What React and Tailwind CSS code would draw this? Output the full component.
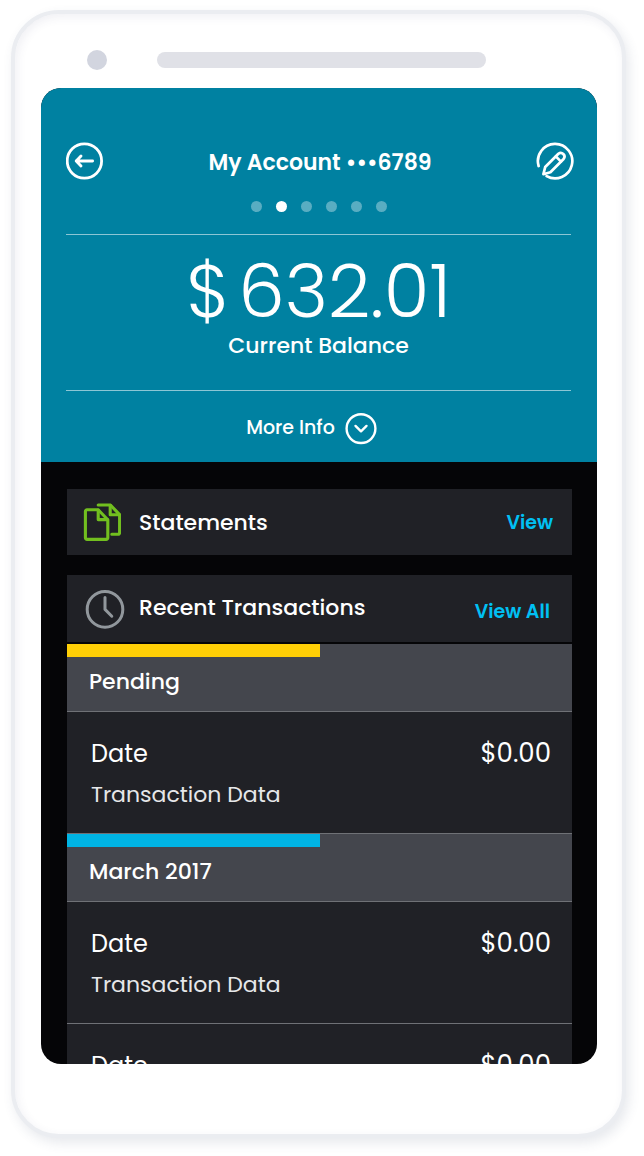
const transactionGroups = [
  { title: "Pending", bar: "bg-[#ffcf06]", rows: 1 },
  { title: "March 2017", bar: "bg-[#00b4e4]", rows: 2 },
];

function BackIcon() {
  return (
    <svg viewBox="0 0 38 38" className="size-[38px]" fill="none" stroke="currentColor" strokeLinecap="round" strokeLinejoin="round" aria-hidden="true">
      <circle cx="18.4" cy="19" r="17.2" strokeWidth="2.8" />
      <path d="M26.6 19H10.2M15 14L10.2 19l4.8 5" strokeWidth="2.9" />
    </svg>
  );
}

function EditIcon() {
  return (
    <svg viewBox="0 0 38 38" className="size-[38px]" fill="none" stroke="currentColor" strokeLinecap="round" strokeLinejoin="round" strokeWidth="2.7" aria-hidden="true">
      <path d="M2.6 24A17.2 17.2 0 1 1 10.6 34.1" />
      <path d="M7.4 32.2l1.8-7.2L22.4 11.8a3.7 3.7 0 0 1 5.2 5.2L14.4 30.2z" />
      <path d="M19.8 14.4l5.2 5.2" />
    </svg>
  );
}

function ChevronIcon() {
  return (
    <svg viewBox="0 0 32 32" className="size-8" fill="none" stroke="currentColor" strokeLinecap="round" strokeLinejoin="round" strokeWidth="2.4" aria-hidden="true">
      <circle cx="16" cy="15.6" r="14.4" />
      <path d="M10.5 12.9l5.5 5.4 5.5-5.4" />
    </svg>
  );
}

function StatementsIcon() {
  return (
    <svg viewBox="0 0 38 38" className="size-[38px]" fill="none" stroke="#72bf1f" strokeLinecap="round" strokeLinejoin="round" strokeWidth="3.1" aria-hidden="true">
      <path d="M4 6.8h11.2l9.6 10v18a1.6 1.6 0 0 1-1.6 1.6H4a1.6 1.6 0 0 1-1.6-1.6V8.4A1.6 1.6 0 0 1 4 6.8z" />
      <path d="M15.2 7v9.6h9.4" />
      <path d="M15.2 2h12.2l9.2 9.6v18.2a1.5 1.5 0 0 1-1.5 1.5h-6.3" />
      <path d="M27.2 2.4v9.4h9.2" />
    </svg>
  );
}

function ClockIcon() {
  return (
    <svg viewBox="0 0 40 40" className="size-10" fill="none" stroke="#91979c" strokeLinecap="round" strokeLinejoin="round" strokeWidth="3" aria-hidden="true">
      <circle cx="20" cy="20.4" r="17.8" />
      <path d="M20 8.4v12l6.8 6.8" />
    </svg>
  );
}

function Transaction() {
  return (
    <li className="flex h-[122px] shrink-0 justify-between border-t border-[#6f7176] pt-[25px] pr-[21px] pl-6">
      <div>
        <p className="text-[24px] leading-[34px]">Date</p>
        <p className="mt-2 text-[22px] leading-8 text-[#e6e7e9]">Transaction Data</p>
      </div>
      <p className="text-[26px] leading-8">$0.00</p>
    </li>
  );
}

export default function App() {
  return (
    <div className="flex h-screen flex-col overflow-hidden bg-white pt-[10px] pr-[18px] pb-[18px] pl-[11px] font-[Poppins,Inter,sans-serif]">
      <div className="flex min-h-0 flex-1 flex-col rounded-[48px] border-4 border-[#ebedf1] bg-white pr-[25px] pb-[70px] pl-[26px] shadow-[3px_5px_12px_rgba(60,70,110,0.12),inset_2px_3px_10px_rgba(60,70,110,0.08)]">
        <div className="flex h-[74px] shrink-0 items-center gap-[50px] pt-[18px] pr-[111px] pb-[1px] pl-[46px]">
          <span className="size-5 shrink-0 rounded-full bg-[#d2d5df]" />
          <span className="h-4 flex-1 rounded-full bg-[#e0e1e7]" />
        </div>

        <main className="flex min-h-0 flex-1 flex-col overflow-hidden rounded-[20px] bg-[#050507] text-white">
          <header className="shrink-0 bg-[#0081a1] pt-[54px] pr-[26px] pl-[25px]">
            <div className="flex items-center justify-between">
              <button type="button" aria-label="Back"><BackIcon /></button>
              <h1 className="pt-1 text-[22px] leading-8 font-semibold">My Account •••6789</h1>
              <button type="button" aria-label="Edit account" className="-mr-[3px]"><EditIcon /></button>
            </div>
            <div className="mt-[21px] flex justify-center gap-[14px]">
              <span className="size-[11px] rounded-full bg-white/35" />
              <span className="size-[11px] rounded-full bg-white" />
              <span className="size-[11px] rounded-full bg-white/35" />
              <span className="size-[11px] rounded-full bg-white/35" />
              <span className="size-[11px] rounded-full bg-white/35" />
              <span className="size-[11px] rounded-full bg-white/35" />
            </div>
            <div className="mt-[22px] h-[157px] border-y border-white/55 pt-4 text-center">
              <p className="flex justify-center gap-2 text-[74px] leading-20 font-light">
                <span>$</span>
                <span>632.01</span>
              </p>
              <p className="text-[22px] leading-[30px] font-medium">Current Balance</p>
            </div>
            <button type="button" className="flex h-[71px] w-full items-center justify-center gap-[10px] pt-1 pr-[14px] text-[19px] font-medium">
              More Info
              <ChevronIcon />
            </button>
          </header>

          <div className="flex min-h-0 flex-1 flex-col gap-5 overflow-hidden pt-[27px] pr-[25px] pl-[26px]">
            <section className="flex h-[66px] shrink-0 items-center bg-[#202126] pr-[19px] pl-4">
              <StatementsIcon />
              <h2 className="flex-1 pl-[18px] text-[22px] font-medium">Statements</h2>
              <a href="#statements" className="pt-[2px] text-[19px] font-semibold text-[#00c0f3]">View</a>
            </section>

            <section className="flex min-h-0 flex-1 flex-col bg-[#202126]">
              <div className="flex h-[69px] shrink-0 items-center border-b-2 border-[#050507] pr-[22px] pl-[18px]">
                <ClockIcon />
                <h2 className="flex-1 pb-[2px] pl-[14px] text-[22px] font-medium">Recent Transactions</h2>
                <a href="#transactions" className="pt-2 text-[19px] font-semibold text-[#00c0f3]">View All</a>
              </div>
              {transactionGroups.map((group, index) => (
                <div key={group.title} className={index > 0 ? "shrink-0 border-t border-[#6f7176]" : "shrink-0"}>
                  <div className="h-[67px] bg-[#44464d]">
                    <div className={`h-[13px] w-1/2 ${group.bar}`} />
                    <h3 className="pt-[7px] pl-[22px] text-[22px] leading-9 font-medium">{group.title}</h3>
                  </div>
                  <ul>
                    {Array.from({ length: group.rows }, (_, row) => <Transaction key={row} />)}
                  </ul>
                </div>
              ))}
            </section>
          </div>
        </main>
      </div>
    </div>
  );
}
